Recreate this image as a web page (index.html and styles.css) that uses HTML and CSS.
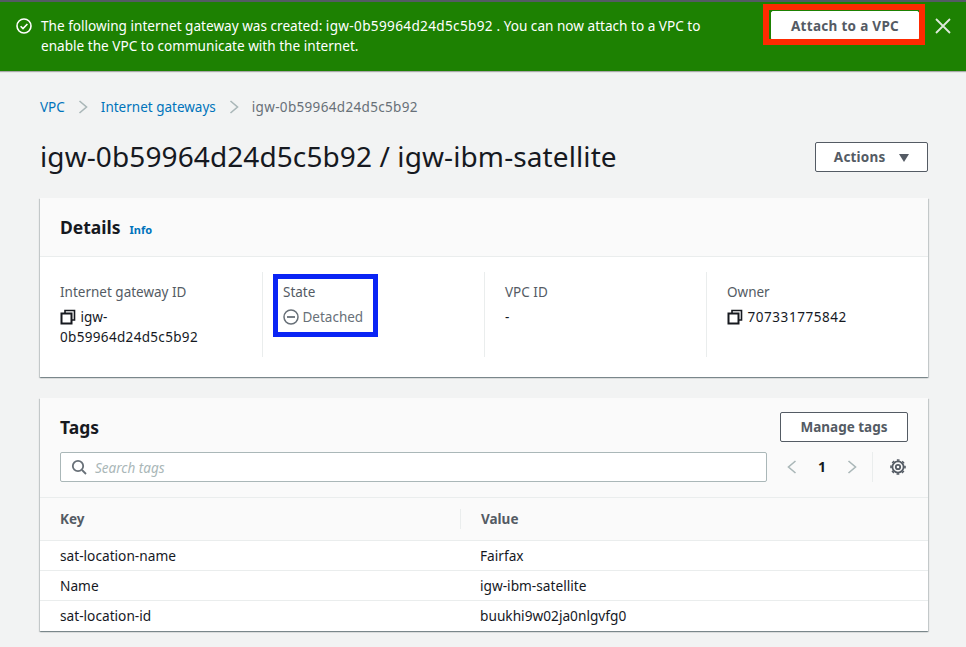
FILE: index.html
```html
<!DOCTYPE html>
<html lang="en">
<head>
    <meta charset="UTF-8">
    <title>igw-0b59964d24d5c5b92 / igw-ibm-satellite</title>
    <link rel="stylesheet" href="styles.css">
</head>
<body>
    <div class="flash">
        <svg class="flash-icon" width="18" height="18" viewBox="0 0 18 18"><circle cx="9" cy="9" r="7" fill="none" stroke="#fff" stroke-width="1.6"/><path d="M5.600 9.200l2.400 2.400 4.400-4.600" fill="none" stroke="#fff" stroke-width="1.6"/></svg>
        <p class="flash-text">
            <span class="line">The following internet gateway was created: <span class="id">igw-0b59964d24d5c5b92</span> . You can now attach to a VPC to</span>
            <span class="line">enable the VPC to communicate with the internet.</span>
        </p>
        <button class="btn btn-flash">Attach to a VPC</button>
        <svg class="flash-close" width="16" height="16" viewBox="0 0 16 16"><path d="M1 1l14 14M15 1L1 15" fill="none" stroke="#dfe9dc" stroke-width="1.8"/></svg>
    </div>
    <main class="content">
        <nav class="crumbs">
            <a href="#">VPC</a>
            <svg class="crumb-sep" width="10" height="16" viewBox="0 0 10 16"><path d="M1.500 2l7 6-7 6" fill="none" stroke="#aab7b8" stroke-width="1.6"/></svg>
            <a href="#">Internet gateways</a>
            <svg class="crumb-sep" width="10" height="16" viewBox="0 0 10 16"><path d="M1.500 2l7 6-7 6" fill="none" stroke="#aab7b8" stroke-width="1.6"/></svg>
            <span class="id">igw-0b59964d24d5c5b92</span>
        </nav>
        <div class="title-row">
            <h1>igw-0b59964d24d5c5b92 / igw-ibm-satellite</h1>
            <button class="btn btn-actions">Actions <span class="caret"></span></button>
        </div>
        <section class="card">
            <div class="card-head">
                <h2>Details</h2>
                <a class="info" href="#">Info</a>
            </div>
            <div class="details">
                <div class="col">
                    <div class="label">Internet gateway ID</div>
                    <div class="val">
                        <svg class="copy" width="16" height="16" viewBox="0 0 16 16"><path d="M5 4V1.500h9.500V11H12" fill="none" stroke="#16191f" stroke-width="1.6"/><rect x="1.500" y="4.500" width="10" height="10" fill="none" stroke="#16191f" stroke-width="2"/></svg>
                        igw-<br><span class="id">0b59964d24d5c5b92</span>
                    </div>
                </div>
                <div class="col">
                    <div class="label">State</div>
                    <div class="val state">
                        <svg class="minus" width="16" height="16" viewBox="0 0 16 16"><circle cx="8" cy="8" r="7" fill="none" stroke="#687078" stroke-width="1.5"/><path d="M4 8h8" stroke="#687078" stroke-width="1.8"/></svg>
                        Detached
                    </div>
                </div>
                <div class="col">
                    <div class="label">VPC ID</div>
                    <div class="val">-</div>
                </div>
                <div class="col">
                    <div class="label">Owner</div>
                    <div class="val">
                        <svg class="copy" width="16" height="16" viewBox="0 0 16 16"><path d="M5 4V1.500h9.500V11H12" fill="none" stroke="#16191f" stroke-width="1.6"/><rect x="1.500" y="4.500" width="10" height="10" fill="none" stroke="#16191f" stroke-width="2"/></svg>
                        <span class="owner-id">707331775842</span>
                    </div>
                </div>
            </div>
        </section>
        <section class="card tags">
            <div class="tags-head">
                <div class="tags-top">
                    <h2>Tags</h2>
                    <button class="btn btn-manage">Manage tags</button>
                </div>
                <div class="tools">
                    <div class="search">
                        <svg width="16" height="16" viewBox="0 0 16 16"><circle cx="7" cy="7" r="5.200" fill="none" stroke="#687078" stroke-width="1.8"/><path d="M11 11l4 4" stroke="#687078" stroke-width="1.8"/></svg>
                        <span>Search tags</span>
                    </div>
                    <div class="pager">
                        <svg width="10" height="16" viewBox="0 0 10 16"><path d="M8.500 2l-7 6 7 6" fill="none" stroke="#aab7b8" stroke-width="1.6"/></svg>
                        <b>1</b>
                        <svg width="10" height="16" viewBox="0 0 10 16"><path d="M1.500 2l7 6-7 6" fill="none" stroke="#aab7b8" stroke-width="1.6"/></svg>
                    </div>
                    <div class="gear">
                        <svg width="16" height="16" viewBox="0 0 16 16"><circle cx="8" cy="8" r="5.600" fill="none" stroke="#545b64" stroke-width="1.800"/><circle cx="8" cy="8" r="7" fill="none" stroke="#545b64" stroke-width="1.600" stroke-dasharray="2.700 2.800" stroke-dashoffset="1.350"/><circle cx="8" cy="8" r="2.200" fill="none" stroke="#545b64" stroke-width="1.800"/></svg>
                    </div>
                </div>
            </div>
            <table class="tag-table">
                <thead>
                    <tr><th>Key</th><th><span class="th-sep">Value</span></th></tr>
                </thead>
                <tbody>
                    <tr><td>sat-location-name</td><td>Fairfax</td></tr>
                    <tr><td>Name</td><td>igw-ibm-satellite</td></tr>
                    <tr class="last"><td>sat-location-id</td><td>buukhi9w02ja0nlgvfg0</td></tr>
                </tbody>
            </table>
        </section>
    </main>
    <!-- hand drawn marks on the screenshot -->
    <div class="mark mark-red"></div>
    <div class="mark mark-blue"></div>
</body>
</html>
```

FILE: styles.css
```css
* {
    box-sizing: border-box;
}
html, body {
    height: 100%;
}
body {
    margin: 0;
    font-family: "Noto Sans", Arial, sans-serif;
    font-size: 14px;
    line-height: 20px;
    color: #16191f;
    background-color: #f2f3f3;
    overflow: hidden;
    position: relative;
}
.id {
    letter-spacing: 0.33px;
}
.owner-id {
    letter-spacing: 0.55px;
}
.flash {
    display: flex;
    align-items: flex-start;
    height: 71px;
    padding: 14px 0 0 15px;
    background-color: #1d8102;
    border-top: 2px solid #545b64;
    box-shadow: 0 1px 1px rgba(0,0,0,0.3);
    color: #fff;
}
.flash-icon {
    margin-top: 1px;
    margin-right: 8px;
    flex: none;
}
.flash-text {
    flex: none;
    margin: 0;
    width: 716px;
    font-size: 13.6px;
}
.line {
    display: block;
}
.btn {
    font-family: inherit;
    font-weight: 700;
    font-size: 13.5px;
    line-height: 20px;
    color: #545b64;
    background-color: #fff;
    border: 1px solid #545b64;
    border-radius: 2px;
    padding: 0;
    letter-spacing: 0.2px;
}
.btn-flash {
    flex: none;
    width: 148px;
    height: 29px;
    margin-left: 14px;
    margin-top: -5px;
    border-color: #fff;
    letter-spacing: 0.3px;
}
.flash-close {
    flex: none;
    margin-left: 16px;
    margin-top: 2px;
}
.content {
    padding: 0 38px 0 40px;
}
.crumbs {
    display: flex;
    align-items: center;
    height: 20px;
    margin-top: 26px;
    color: #687078;
    font-size: 13.5px;
}
.crumbs a {
    color: #0073bb;
    text-decoration: none;
}
.crumb-sep {
    margin: 0 13px;
}
.title-row {
    display: flex;
    justify-content: space-between;
    align-items: center;
    margin-top: 20px;
    height: 40px;
}
h1 {
    margin: 0 0 2px;
    font-size: 28px;
    font-weight: 400;
    line-height: 38px;
    letter-spacing: 0.1px;
}
.btn-actions {
    width: 113px;
    height: 30px;
}
.caret {
    display: inline-block;
    width: 0;
    height: 0;
    margin-left: 10px;
    border-left: 5.5px solid transparent;
    border-right: 5.5px solid transparent;
    border-top: 8px solid #545b64;
}
.card {
    background-color: #fff;
    box-shadow: 0 1px 1px 0 rgba(0,28,36,0.3), 1px 1px 1px 0 rgba(0,28,36,0.15), -1px 1px 1px 0 rgba(0,28,36,0.15);
    margin-top: 21px;
}
.card-head {
    display: flex;
    align-items: baseline;
    height: 59px;
    padding: 17px 20px 0;
    background-color: #fafafa;
    border-bottom: 1px solid #eaeded;
}
h2 {
    margin: 0;
    font-size: 17.5px;
    font-weight: 700;
    line-height: 24px;
}
.info {
    margin-left: 9px;
    font-size: 11px;
    font-weight: 700;
    color: #0073bb;
    text-decoration: none;
}
.details {
    display: grid;
    grid-template-columns: 202px 222px 222px 222px;
    height: 120px;
    padding: 15px 0 0 20px;
}
.col {
    height: 85px;
    padding: 10px 0 0 20px;
    border-left: 1px solid #eaeded;
}
.col:first-child {
    padding-left: 0;
    border-left: none;
}
.label {
    color: #545b64;
    font-size: 13.5px;
    margin-bottom: 5px;
}
.val {
    font-size: 13.5px;
}
.copy {
    vertical-align: -3px;
    margin-right: 1px;
}
.state {
    color: #687078;
}
.minus {
    vertical-align: -3px;
}
.tags-head {
    height: 100px;
    padding: 14px 20px 0;
    background-color: #fafafa;
    border-bottom: 1px solid #eaeded;
}
.tags-top {
    display: flex;
    justify-content: space-between;
    align-items: center;
    height: 30px;
}
.btn-manage {
    width: 128px;
    height: 30px;
    letter-spacing: 0;
}
.tools {
    display: flex;
    align-items: center;
    margin-top: 10px;
}
.search {
    display: flex;
    align-items: center;
    width: 707px;
    height: 30px;
    padding-left: 10px;
    background-color: #fff;
    border: 1px solid #aab7b8;
    border-radius: 2px;
}
.search span {
    margin-left: 8px;
    margin-top: 1px;
    font-style: italic;
    font-size: 13.5px;
    color: #aab7b8;
}
.pager {
    display: flex;
    align-items: center;
    width: 106px;
    height: 30px;
    padding-left: 20px;
    border-right: 1px solid #eaeded;
}
.pager b {
    width: 50px;
    text-align: center;
}
.gear {
    display: flex;
    padding-left: 17px;
}
.tag-table {
    width: 100%;
    border-collapse: collapse;
    font-size: 13.7px;
}
.tag-table th {
    height: 42px;
    padding: 1px 20px 0;
    text-align: left;
    font-weight: 700;
    font-size: 13.5px;
    color: #545b64;
    background-color: #fafafa;
    border-bottom: 1px solid #eaeded;
}
.tag-table th:first-child,
.tag-table td:first-child {
    width: 420px;
}
.th-sep {
    display: block;
    margin-left: -20px;
    padding-left: 20px;
    border-left: 1px solid #eaeded;
}
.tag-table td {
    height: 30px;
    padding: 1px 20px 0;
    border-top: 1px solid #eaeded;
}
.tag-table .last td {
    height: 31px;
}
.mark {
    position: absolute;
    border-style: solid;
}
.mark-red {
    left: 763px;
    top: 4px;
    width: 162px;
    height: 41px;
    border-width: 6px;
    border-color: #ff2a00;
}
.mark-blue {
    left: 273px;
    top: 274px;
    width: 105px;
    height: 63px;
    border-width: 5px;
    border-color: #0a24f5;
}
```
